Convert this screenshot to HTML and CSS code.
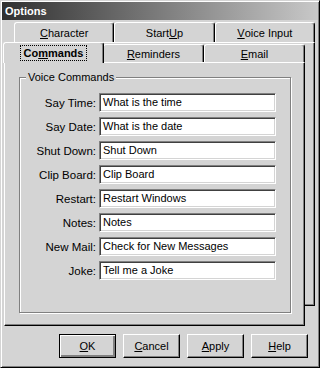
FILE: index.html
```html
<!DOCTYPE html>
<html lang="en">
<head>
    <meta charset="UTF-8">
    <title>Options</title>
    <link rel="stylesheet" href="styles.css">
</head>
<body>
    <div class="window">
        <div class="titlebar">Options</div>

        <div class="dialog">
            <div class="stack">
                <!-- back row of tabs -->
                <div class="sheet sheet-back">
                    <div class="tabrow">
                        <div class="tab"><u>C</u>haracter</div>
                        <div class="tab">Start<u>U</u>p</div>
                        <div class="tab"><u>V</u>oice Input</div>
                    </div>
                    <div class="page"></div>
                </div>

                <!-- front row of tabs -->
                <div class="sheet sheet-front">
                    <div class="tabrow">
                        <div class="tab active"><span class="focus">Co<u>m</u>mands</span></div>
                        <div class="tab"><u>R</u>eminders</div>
                        <div class="tab"><u>E</u>mail</div>
                    </div>
                    <div class="page">
                        <div class="group">
                            <span class="group-title">Voice Commands</span>
                            <div class="row"><label>Say Time:</label><div class="field">What is the time</div></div>
                            <div class="row"><label>Say Date:</label><div class="field">What is the date</div></div>
                            <div class="row"><label>Shut Down:</label><div class="field">Shut Down</div></div>
                            <div class="row"><label>Clip Board:</label><div class="field">Clip Board</div></div>
                            <div class="row"><label>Restart:</label><div class="field">Restart Windows</div></div>
                            <div class="row"><label>Notes:</label><div class="field">Notes</div></div>
                            <div class="row"><label>New Mail:</label><div class="field">Check for New Messages</div></div>
                            <div class="row"><label>Joke:</label><div class="field">Tell me a Joke</div></div>
                        </div>
                    </div>
                </div>
            </div>

            <div class="buttons">
                <button class="btn default"><u>O</u>K</button>
                <button class="btn"><u>C</u>ancel</button>
                <button class="btn"><u>A</u>pply</button>
                <button class="btn"><u>H</u>elp</button>
            </div>
        </div>
    </div>
</body>
</html>
```

FILE: styles.css
```css
body {
    margin: 0;
    padding: 0;
    background: #d4d4d4;
    font-family: "Liberation Sans", Arial, sans-serif;
    font-size: 11px;
    color: #000;
}

u {
    text-decoration: underline;
    text-underline-offset: 1px;
}

.window {
    width: 320px;
    height: 368px;
    box-sizing: border-box;
    border: 1px solid;
    border-color: #d4d4d4 #000 #000 #d4d4d4;
    box-shadow: inset 1px 1px 0 #fff, inset -1px -1px 0 #808080;
    padding: 1px;
    display: flex;
    flex-direction: column;
}

.titlebar {
    height: 18px;
    line-height: 18px;
    padding-left: 3px;
    color: #fff;
    font-weight: bold;
    background: linear-gradient(to right, #303030, #c8c8c8);
}

.dialog {
    flex: 1;
    display: flex;
    flex-direction: column;
    padding: 2px 2px 0 2px;
}

/* Tab sheets, two rows stacked in one grid cell */
.stack {
    display: grid;
    height: 304px;
}

.sheet {
    grid-area: 1 / 1;
    display: flex;
    flex-direction: column;
}

.sheet-back {
    margin: 0 1px 20px 10px;
}

.sheet-front {
    margin: 20px 11px 0 0;
}

.tabrow {
    display: flex;
    height: 20px;
    position: relative;
    z-index: 1;
}

.tab {
    flex: 1;
    box-sizing: border-box;
    margin-top: 2px;
    border: 1px solid #fff;
    border-bottom: none;
    border-right-color: #000;
    border-radius: 3px 3px 0 0;
    box-shadow: inset -1px 0 0 #808080;
    display: flex;
    align-items: center;
    justify-content: center;
    background: #d4d4d4;
}

.sheet-back .tab {
    margin-top: 0;
}

.tab.active {
    margin: 0 -1px -1px -1px;
    font-weight: bold;
    padding-bottom: 1px;
    z-index: 2;
}

.focus {
    outline: 1px dotted #000;
    padding: 1px 3px;
}

.page {
    flex: 1;
    box-sizing: border-box;
    border: 1px solid;
    border-color: #fff #000 #000 #fff;
    box-shadow: inset -1px -1px 0 #808080;
    background: #d4d4d4;
    display: flex;
    flex-direction: column;
    padding: 14px 13px 12px 14px;
}

/* Group box */
.group {
    flex: 1;
    position: relative;
    border: 1px solid #808080;
    box-shadow: 1px 1px 0 #fff, inset 1px 1px 0 #fff;
    padding: 15px 14px 0 0;
    display: flex;
    flex-direction: column;
    gap: 5px;
}

.group-title {
    position: absolute;
    top: -7px;
    left: 6px;
    padding: 0 2px;
    background: #d4d4d4;
}

.row {
    display: flex;
    align-items: center;
    gap: 3px;
}

.row label {
    width: 76px;
    text-align: right;
    font-size: 11.5px;
}

.field {
    flex: 1;
    height: 19px;
    box-sizing: border-box;
    border: 1px solid;
    border-color: #808080 #fff #fff #808080;
    box-shadow: inset 1px 1px 0 #404040, inset -1px -1px 0 #d4d4d4;
    background: #fff;
    padding: 2px 0 0 3px;
    white-space: nowrap;
    overflow: hidden;
}

/* Bottom buttons */
.buttons {
    display: flex;
    justify-content: flex-end;
    gap: 7px;
    margin-top: 8px;
    padding-right: 8px;
}

.btn {
    width: 57px;
    height: 24px;
    font-family: inherit;
    font-size: 11px;
    color: #000;
    background: #d4d4d4;
    border: 1px solid;
    border-color: #fff #000 #000 #fff;
    box-shadow: inset -1px -1px 0 #808080;
    padding: 0;
}

.btn.default {
    border: 1px solid #000;
    box-shadow: inset 1px 1px 0 #fff, inset -2px -2px 0 #808080;
}
```
